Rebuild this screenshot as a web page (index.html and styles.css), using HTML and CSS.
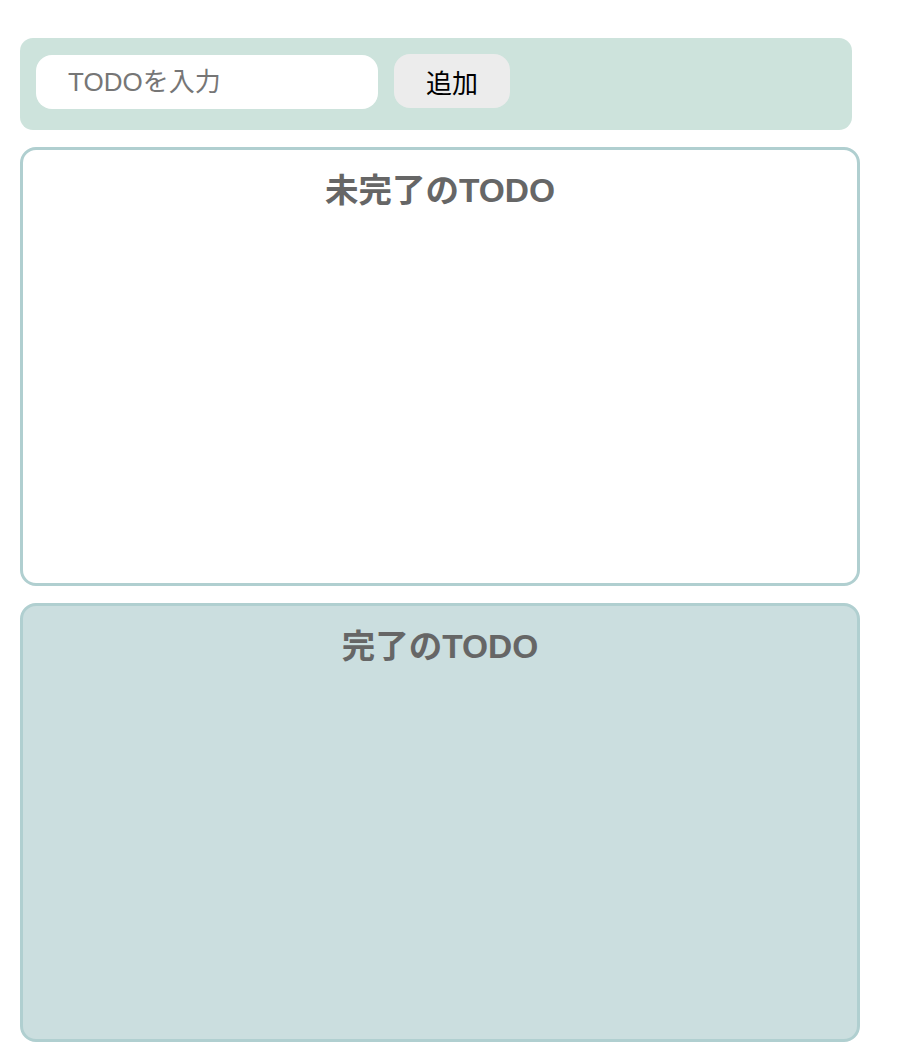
FILE: index.html
```html
<!DOCTYPE html>
<html lang="ja">
<head>
<meta charset="utf-8">
<title>TODO</title>
<link rel="stylesheet" href="styles.css">
</head>
<body>
<div class="page">
  <div class="input-area">
    <input class="todo-input" type="text" placeholder="TODOを入力">
    <button class="add-button" type="button">追加</button>
  </div>
  <div class="incomplete-area">
    <p class="title">未完了のTODO</p>
    <ul class="list"></ul>
  </div>
  <div class="complete-area">
    <p class="title">完了のTODO</p>
    <ul class="list"></ul>
  </div>
</div>
</body>
</html>
```
FILE: styles.css
```css
html, body {
  margin: 0;
  padding: 0;
  background: #ffffff;
}

body {
  font-family: "Noto Sans CJK JP", "Noto Sans", sans-serif;
}

.page {
  padding: 38px 0 0 20px;
  display: flex;
  flex-direction: column;
  gap: 17px;
  align-items: flex-start;
}

.input-area {
  box-sizing: border-box;
  width: 832px;
  height: 92px;
  padding: 16px;
  background-color: #cde3dc;
  border-radius: 13px;
  display: flex;
  align-items: flex-start;
  gap: 16px;
}

.todo-input {
  box-sizing: border-box;
  width: 342px;
  height: 54px;
  margin-top: 1px;
  border: none;
  outline: none;
  border-radius: 16px;
  padding: 0 32px;
  font-family: "Liberation Sans", "Noto Sans CJK JP", sans-serif;
  font-size: 26px;
  color: #222;
  background: #fff;
}

.todo-input::placeholder {
  color: #767676;
}

.add-button {
  box-sizing: border-box;
  height: 54px;
  width: 116px;
  border: none;
  border-radius: 16px;
  background: #ececec;
  font-family: "Noto Sans CJK JP", sans-serif;
  font-size: 26px;
  color: #000;
  padding: 0 32px;
}

.incomplete-area,
.complete-area {
  box-sizing: border-box;
  width: 840px;
  min-height: 439px;
  border: 3px solid #b0cfd0;
  border-radius: 16px;
  padding: 16px;
}

.incomplete-area {
  background: #ffffff;
}

.complete-area {
  background: #cbdedf;
}

.title {
  margin: 0;
  padding-top: 4px;
  text-align: center;
  font-weight: bold;
  font-size: 33.5px;
  line-height: 1.25;
  color: #666666;
  font-family: "Liberation Sans", "Noto Sans CJK JP", sans-serif;
}

.list {
  margin: 0;
  padding: 0;
  list-style: none;
}
```
